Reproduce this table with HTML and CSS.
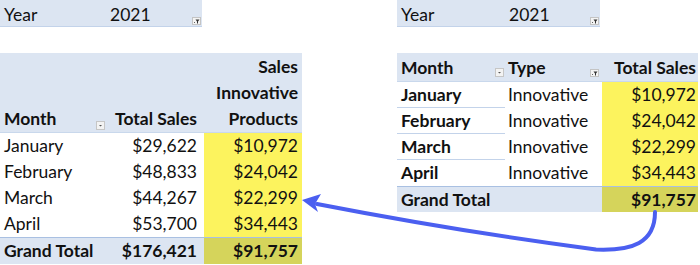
FILE: index.html
```html
<!DOCTYPE html>
<html>
<head>
<meta charset="utf-8">
<link rel="stylesheet" href="styles.css">
</head>
<body>
<div class="page">
  <section class="pivot pivot-left">
    <div class="filter">
      <span class="f-label">Year</span>
      <span class="f-value"><span>2021</span>
        <svg class="btn" width="9" height="8" viewBox="0 0 9 8"><rect x=".5" y=".5" width="8" height="7" fill="#f4f4f4" stroke="#c4c4c4"/><path d="M3.5 2.5h4l-1.5 2v2h-1v-2z" fill="#333"/><rect x="2" y="5" width="1" height="1" fill="#666"/></svg>
      </span>
    </div>
    <div class="grid g-left">
      <div class="h c1"><span>Month</span>
        <svg class="btn drop" width="9" height="9" viewBox="0 0 9 9"><rect x=".5" y=".5" width="8" height="8" fill="#f3f3f3" stroke="#c6c6c6"/><path d="M3 4h3l-1.5 1.6z" fill="#555"/></svg>
      </div>
      <div class="h c2">Total Sales</div>
      <div class="h c3">Sales<br>Innovative<br>Products</div>

      <div class="c1">January</div><div class="c2">$29,622</div><div class="c3 yel">$10,972</div>
      <div class="c1">February</div><div class="c2">$48,833</div><div class="c3 yel">$24,042</div>
      <div class="c1">March</div><div class="c2">$44,267</div><div class="c3 yel">$22,299</div>
      <div class="c1">April</div><div class="c2">$53,700</div><div class="c3 yel">$34,443</div>

      <div class="c1 gt">Grand Total</div><div class="c2 gt">$176,421</div><div class="c3 gt olive">$91,757</div>
    </div>
  </section>

  <section class="pivot pivot-right">
    <div class="filter">
      <span class="f-label">Year</span>
      <span class="f-value"><span>2021</span>
        <svg class="btn" width="9" height="8" viewBox="0 0 9 8"><rect x=".5" y=".5" width="8" height="7" fill="#f4f4f4" stroke="#c4c4c4"/><path d="M3.5 2.5h4l-1.5 2v2h-1v-2z" fill="#333"/><rect x="2" y="5" width="1" height="1" fill="#666"/></svg>
      </span>
    </div>
    <div class="grid g-right">
      <div class="h r1"><span>Month</span>
        <svg class="btn drop" width="9" height="9" viewBox="0 0 9 9"><rect x=".5" y=".5" width="8" height="8" fill="#f3f3f3" stroke="#c6c6c6"/><path d="M3 4h3l-1.5 1.6z" fill="#555"/></svg>
      </div>
      <div class="h r2"><span>Type</span>
        <svg class="btn drop2" width="9" height="8" viewBox="0 0 9 8"><rect x=".5" y=".5" width="8" height="7" fill="#f4f4f4" stroke="#c4c4c4"/><path d="M3.5 2.5h4l-1.5 2v2h-1v-2z" fill="#333"/><rect x="2" y="5" width="1" height="1" fill="#666"/></svg>
      </div>
      <div class="h r3">Total Sales</div>

      <div class="r1 lbl">January</div><div class="r2">Innovative</div><div class="r3 yel">$10,972</div>
      <div class="r1 lbl">February</div><div class="r2">Innovative</div><div class="r3 yel">$24,042</div>
      <div class="r1 lbl">March</div><div class="r2">Innovative</div><div class="r3 yel">$22,299</div>
      <div class="r1 lbl last">April</div><div class="r2">Innovative</div><div class="r3 yel">$34,443</div>

      <div class="r1 gt">Grand Total</div><div class="r2 gt"></div><div class="r3 gt olive">$91,757</div>
    </div>
  </section>

  <svg class="arrow" width="700" height="265" viewBox="0 0 700 265">
    <path d="M655,212 C655,243 632,251 596,249.5 Q456,231 317,204" fill="none" stroke="#4b5ff0" stroke-width="4" stroke-linecap="round"/>
    <polygon points="302,200 321,194 315,204 318,212" fill="#4b5ff0"/>
  </svg>
</div>
</body>
</html>
```

FILE: styles.css
```css
* { box-sizing: border-box; }
html, body { margin: 0; padding: 0; background: #ffffff; }
body {
  font-family: Lato, "Open Sans", sans-serif;
  font-size: 17.5px;
  color: #111;
}
.page {
  position: relative;
  width: 700px;
  height: 265px;
  display: flex;
  justify-content: space-between;
  overflow: hidden;
}
.pivot { display: flex; flex-direction: column; }
.pivot-left { width: 302px; }
.pivot-right { width: 303px; }

.filter {
  display: grid;
  height: 27px;
  background: #dce5f2;
  border-bottom: 1px solid #c3d3ea;
  line-height: 26px;
  padding-top: 2px;
}
.pivot-left .filter { width: 202px; grid-template-columns: 105px 97px; }
.pivot-right .filter { width: 203px; grid-template-columns: 107px 96px; }
.f-label { padding-left: 4px; }
.f-value {
  display: flex;
  justify-content: space-between;
  align-items: flex-end;
  padding-left: 5px;
  padding-right: 1px;
}
.f-value .btn { margin-bottom: 3px; }
.pivot-right .f-value { padding-right: 1px; padding-left: 5px; }

.grid {
  display: grid;
  margin-top: 26px;
  line-height: 26px;
}
.g-left { grid-template-columns: 105px 99px 98px; grid-template-rows: 80px repeat(4, 26px) 27px; }
.g-right { grid-template-columns: 108px 97px 96px; grid-template-rows: 29px repeat(4, 26px) 26px; }

.h {
  background: #dce5f2;
  font-weight: 700;
  border-bottom: 1px solid #c9d8ec;
}
.g-left .h { display: flex; align-items: flex-end; }
.g-left .h.c1 { justify-content: space-between; padding-right: 0; }
.g-left .h.c2, .g-left .h.c3 { justify-content: flex-end; text-align: right; }
.g-left .h.c3 { padding-bottom: 0; }
.btn { display: block; flex: none; }
.g-left .drop { margin-bottom: 2px; }

.c1 { padding-left: 4px; }
.c2 { text-align: right; padding-right: 7px; }
.c3 { text-align: right; padding-right: 4px; }

.yel { background: #fcf35e; }
.gt {
  background: #dce5f2;
  font-weight: 700;
  border-top: 1px solid #a9c0e2;
}
.gt.olive { background: #d5d45b; }

.g-right .h { display: flex; align-items: flex-end; padding-top: 2px; }
.g-right .h.r1, .g-right .h.r2 { justify-content: space-between; }
.g-right .h.r3 { justify-content: flex-end; }
.g-right .drop { margin-bottom: 4px; }
.g-right .drop2 { margin-bottom: 4px; margin-right: 3px; }
.r1 { padding-left: 4px; padding-right: 1px; }
.r2 { padding-left: 3px; }
.r3 { text-align: right; padding-right: 2px; }
.lbl { font-weight: 700; border-bottom: 1px solid #c3d3ea; }
.lbl.last { border-bottom: none; }

.arrow {
  position: absolute;
  left: 0;
  top: 0;
  pointer-events: none;
}
```
